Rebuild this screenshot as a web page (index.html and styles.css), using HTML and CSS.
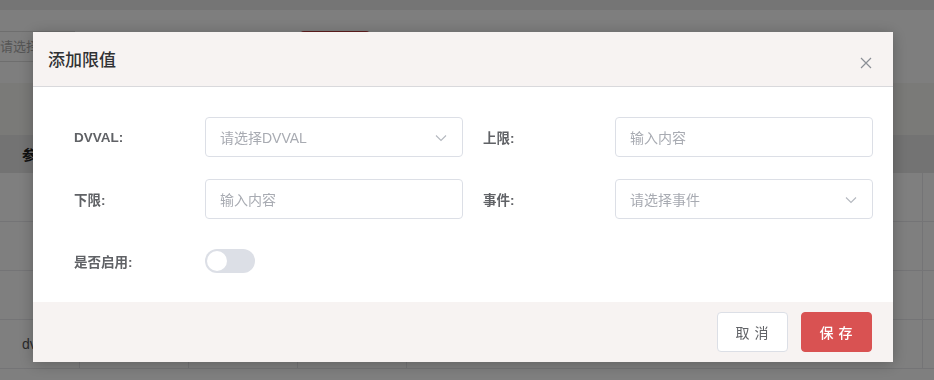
FILE: index.html
```html
<!DOCTYPE html>
<html lang="zh">
<head>
<meta charset="utf-8">
<link rel="stylesheet" href="styles.css">
</head>
<body>
<div class="page">
  <div class="topbar"></div>
  <div class="toolbar">
    <div class="bg-input">请选择</div>
    <div class="bg-btn">查询</div>
  </div>
  <div class="strip"></div>
  <div class="table">
    <div class="thead"><span class="th">参数</span></div>
    <div class="trow"></div>
    <div class="trow"></div>
    <div class="trow"></div>
    <div class="trow cols"><span class="cell">dvval</span><span class="cell"></span><span class="cell"></span><span class="cell"></span></div>
  </div>
</div>
<div class="overlay"></div>
<div class="dialog">
  <div class="dialog-header">
    <span class="dialog-title">添加限值</span>
    <svg class="close" width="12" height="12" viewBox="0 0 12 12"><path d="M1 1L11 11M11 1L1 11" stroke="#8b8f96" stroke-width="1.2" fill="none"/></svg>
  </div>
  <div class="dialog-body">
    <div class="form-grid">
      <div class="item">
        <label class="label">DVVAL:</label>
        <div class="control select"><span class="ph">请选择DVVAL</span><svg class="arrow" width="12" height="8" viewBox="0 0 12 8"><path d="M1 1.5L6 6.5L11 1.5" stroke="#b4b8bf" stroke-width="1.1" fill="none"/></svg></div>
      </div>
      <div class="item">
        <label class="label">上限:</label>
        <div class="control"><span class="ph">输入内容</span></div>
      </div>
      <div class="item">
        <label class="label">下限:</label>
        <div class="control"><span class="ph">输入内容</span></div>
      </div>
      <div class="item">
        <label class="label">事件:</label>
        <div class="control select"><span class="ph">请选择事件</span><svg class="arrow" width="12" height="8" viewBox="0 0 12 8"><path d="M1 1.5L6 6.5L11 1.5" stroke="#b4b8bf" stroke-width="1.1" fill="none"/></svg></div>
      </div>
      <div class="item">
        <label class="label">是否启用:</label>
        <div class="switch"><span class="knob"></span></div>
      </div>
    </div>
  </div>
  <div class="dialog-footer">
    <button class="btn btn-cancel">取 消</button>
    <button class="btn btn-save">保 存</button>
  </div>
</div>
</body>
</html>
```
FILE: styles.css
```css
html, body {
  margin: 0;
  padding: 0;
  width: 934px;
  height: 380px;
  overflow: hidden;
  font-family: "Liberation Sans", "Noto Sans CJK SC", sans-serif;
}
.page {
  background: #fff;
  height: 380px;
  display: flex;
  flex-direction: column;
}
.topbar { height: 10px; background: #eaeaea; }
.toolbar {
  height: 73px;
  background: #fdfdfd;
  display: flex;
  align-items: flex-start;
  padding-top: 21px;
  box-sizing: border-box;
  gap: 225px;
}
.bg-input {
  width: 75px;
  height: 31px;
  border: 1px solid #ddd;
  border-left: none;
  box-sizing: border-box;
  font-size: 13px;
  color: #aaa;
  line-height: 29px;
}
.bg-btn {
  width: 70px;
  height: 32px;
  background: #c03c3c;
  border-radius: 4px;
  color: #fff;
  font-size: 13px;
  line-height: 32px;
  text-align: center;
}
.strip { height: 52px; background: #f5f4f1; }
.table { flex: 1; display: flex; flex-direction: column; }
.thead {
  height: 38px;
  background: #e6e6e6;
  display: flex;
  align-items: center;
  padding-left: 22px;
  font-size: 14px;
  font-weight: bold;
  color: #222;
}
.trow {
  height: 49px;
  border-bottom: 1px solid #e8e8ec;
  box-sizing: border-box;
  background: #fff;
  position: relative;
}
.trow::after {
  content: "";
  position: absolute;
  left: 922px;
  top: 0;
  bottom: 0;
  border-left: 1px solid #e8e8ec;
}
.cols { display: flex; }
.cell {
  width: 109px;
  border-right: 1px solid #e8e8ec;
  font-size: 14px;
  color: #555;
  padding-left: 22px;
  box-sizing: border-box;
  line-height: 48px;
}
.cell:first-child { width: 80px; }
.overlay {
  position: fixed;
  inset: 0;
  background: rgba(0, 0, 0, 0.5);
}
.dialog {
  position: fixed;
  left: 33px;
  top: 32px;
  width: 860px;
  height: 330px;
  background: #fff;
  box-shadow: 0 2px 14px rgba(0, 0, 0, 0.25);
  display: flex;
  flex-direction: column;
}
.dialog-header {
  height: 55px;
  flex: none;
  background: #f7f3f2;
  border-bottom: 1px solid #d9d9dc;
  display: flex;
  align-items: center;
  justify-content: space-between;
  padding: 0 21px 0 15px;
  box-sizing: border-box;
}
.dialog-title {
  font-family: "Noto Sans CJK SC", sans-serif;
  font-size: 17px;
  font-weight: 500;
  color: #303133;
  margin-top: -2px;
}
.close { margin-top: 8px; }
.dialog-body {
  flex: 1;
  padding: 30px 20px 0 41px;
  box-sizing: border-box;
}
.form-grid {
  display: grid;
  grid-template-columns: 409px 390px;
  row-gap: 22px;
}
.item {
  display: flex;
  align-items: center;
  height: 40px;
}
.label {
  width: 131px;
  flex: none;
  font-size: 13.5px;
  font-weight: bold;
  color: #606266;
}
.item:nth-child(even) .label { width: 132px; }
.control {
  width: 258px;
  height: 40px;
  border: 1px solid #dcdfe6;
  border-radius: 4px;
  box-sizing: border-box;
  display: flex;
  align-items: center;
  justify-content: space-between;
  padding: 0 15px 0 14px;
  font-size: 14px;
}
.ph { color: #a8abb2; }
.arrow { margin-top: 1px; }
.switch {
  width: 50px;
  height: 24px;
  border-radius: 12px;
  background: #dcdfe6;
  position: relative;
}
.knob {
  position: absolute;
  left: 2px;
  top: 2px;
  width: 20px;
  height: 20px;
  border-radius: 50%;
  background: #fff;
}
.dialog-footer {
  height: 60px;
  flex: none;
  background: #f7f3f2;
  display: flex;
  justify-content: flex-end;
  align-items: center;
  gap: 13px;
  padding-right: 21px;
}
.btn {
  width: 71px;
  height: 40px;
  border-radius: 4px;
  font-size: 14px;
  font-family: "Noto Sans CJK SC", sans-serif;
  letter-spacing: 1px;
  box-sizing: border-box;
  padding: 0;
}
.btn-cancel {
  background: #fff;
  border: 1px solid #dcdfe6;
  color: #606266;
}
.btn-save {
  background: #d95252;
  border: 1px solid #d95252;
  color: #fff;
  font-weight: 500;
}
```
